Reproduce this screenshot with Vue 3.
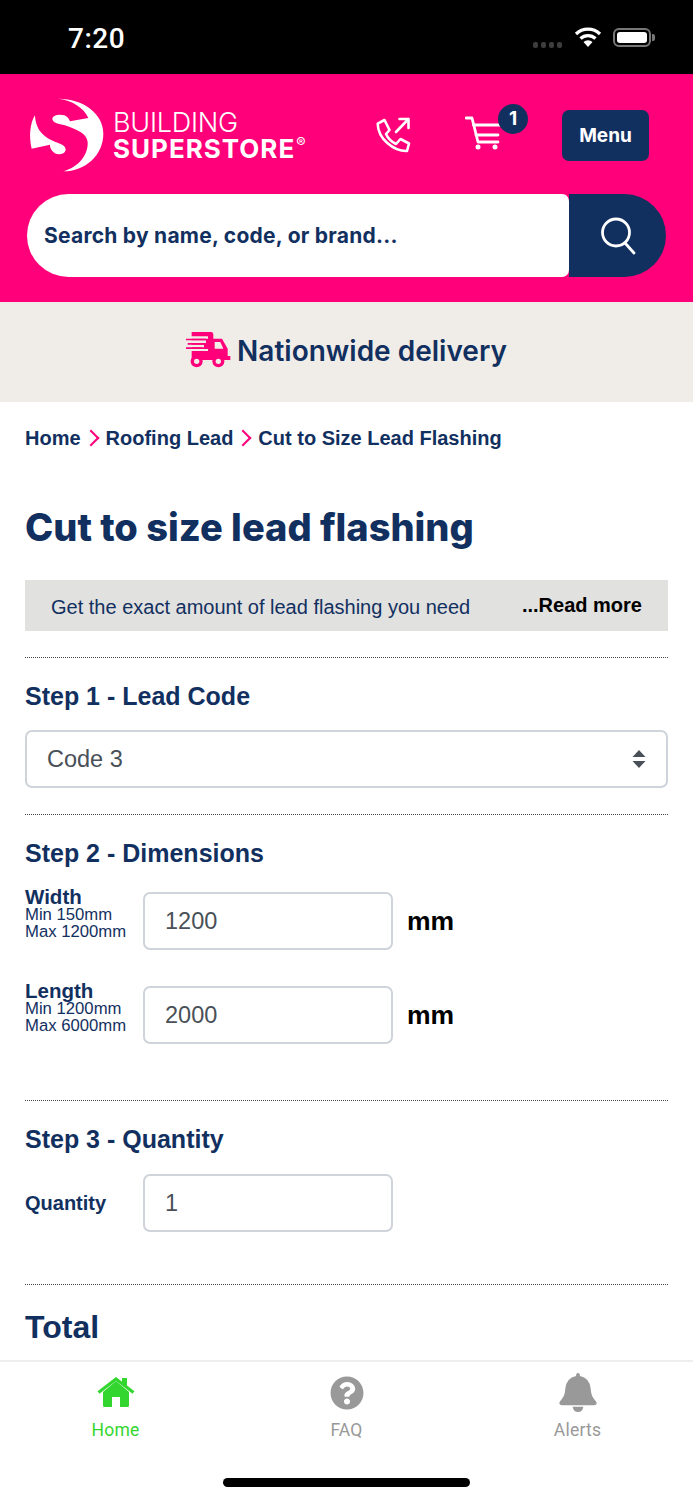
<template>
  <div class="screen">
    <div class="status">
      <span class="time">7:20</span>
      <div class="status-right">
        <div class="dots"><i></i><i></i><i></i><i></i></div>
        <svg class="wifi" width="28" height="22" viewBox="0 0 28 22">
          <path d="M2 8a17 17 0 0 1 24 0" fill="none" stroke="#fff" stroke-width="3.2" />
          <path d="M6.5 12.5a11 11 0 0 1 15 0" fill="none" stroke="#fff" stroke-width="3.2" />
          <path d="M14 21l-4.5-5a6.500 6.500 0 0 1 9 0z" fill="#fff" />
        </svg>
        <div class="battery"><div class="battery-fill"></div></div>
        <div class="battery-cap"></div>
      </div>
    </div>

    <header class="top">
      <div class="top-row">
        <div class="logo">
          <svg class="logo-mark" width="85" height="85" viewBox="0 0 255 255">
            <path fill="#fff" d="M100 20C175 20 235 65 235 125C235 190 180 238 115 238C160 225 190 190 188 150C185 125 160 115 120 100C100 95 82 92 82 80C84 68 105 66 118 70C128 74 133 82 135 88L190 78C178 48 140 24 100 20Z" />
            <path fill="#fff" d="M30 70C14 95 12 135 20 170L75 158C74 172 88 190 108 186C125 182 130 165 105 155C70 143 32 125 30 70Z" />
          </svg>
          <div class="logo-text">
            <span class="logo-building">BUILDING</span>
            <span class="logo-super">SUPERSTORE<sup>®</sup></span>
          </div>
        </div>
        <svg class="phone" width="40" height="40" viewBox="0 0 40 40" fill="none" stroke="#fff" stroke-width="2.6" stroke-linecap="round" stroke-linejoin="round">
          <path d="M2.700 8.700L9.500 5L14.500 15L11 19C13 23.500 17 27 21 29L25.500 24L34 28.500L32 36C19 36.500 3 24 2.700 8.700Z" />
          <path d="M21 17L33.500 4M24.500 4H33.500V13" />
        </svg>
        <div class="cart">
          <svg width="40" height="40" viewBox="0 0 40 40" fill="none" stroke="#fff" stroke-width="2.800" stroke-linecap="round" stroke-linejoin="round">
            <path d="M1 3H7L13 27H33" />
            <path d="M8.500 10H36M11 20H33" />
            <circle cx="13" cy="32" r="2.500" fill="#fff" stroke="none" />
            <circle cx="30" cy="32" r="2.500" fill="#fff" stroke="none" />
          </svg>
          <span class="badge">1</span>
        </div>
        <button class="menu-btn">Menu</button>
      </div>
      <div class="search">
        <div class="search-input">Search by name, code, or brand...</div>
        <div class="search-btn">
          <svg width="38" height="38" viewBox="0 0 38 38" fill="none" stroke="#fff" stroke-width="2.800" stroke-linecap="round">
            <circle cx="16" cy="15.500" r="13.500" />
            <path d="M25 26L34 36" />
          </svg>
        </div>
      </div>
    </header>

    <div class="promo">
      <svg width="46" height="38" viewBox="0 0 138 114">
        <path fill="#ff007a" d="M17 0H75Q82 0 82 8V20H108L125 50V72H133V84H17Z" />
        <path fill="#f0ede8" d="M0 13H66V20H0ZM0 25H60V33H0ZM0 38H54V46H0ZM0 51H66V57H0Z" />
        <path fill="#ff007a" d="M0 20H60V25H0ZM5 33H54V38H5ZM0 46H48V51H0Z" />
        <path fill="#f0ede8" d="M86 30H103L112 50H86Z" />
        <circle cx="32" cy="88" r="18" fill="#ff007a" />
        <circle cx="97" cy="88" r="18" fill="#ff007a" />
        <circle cx="32" cy="88" r="8" fill="#f0ede8" />
        <circle cx="97" cy="88" r="8" fill="#f0ede8" />
      </svg>
      <span>Nationwide delivery</span>
    </div>

    <main class="content">
      <nav class="crumbs">
        <a>Home</a><span class="chev"></span><a>Roofing Lead</a><span class="chev"></span><a>Cut to Size Lead Flashing</a>
      </nav>
      <h1>Cut to size lead flashing</h1>
      <div class="intro">
        <span>Get the exact amount of lead flashing you need</span>
        <b>...Read more</b>
      </div>

      <section class="step">
        <h2>Step 1 - Lead Code</h2>
        <div class="select-wrap">
          <select class="field select">
            <option>Code 3</option>
          </select>
          <svg class="arrows" width="14" height="18" viewBox="0 0 14 18">
            <path fill="#495057" d="M7 0L13.500 7H.5zM7 18L.5 11H13.500z" />
          </svg>
        </div>
      </section>

      <section class="step step-2">
        <h2>Step 2 - Dimensions</h2>
        <div class="dim-list">
          <div v-for="d in dims" :key="d.label" class="dim-row">
            <div class="dim-label">
              <strong>{{ d.label }}</strong>
              <small>{{ d.min }}</small>
              <small>{{ d.max }}</small>
            </div>
            <input class="field short" :value="d.value" />
            <span class="unit">mm</span>
          </div>
        </div>
      </section>

      <section class="step step-3">
        <h2>Step 3 - Quantity</h2>
        <div class="qty-row">
          <label>Quantity</label>
          <input class="field short" value="1" />
        </div>
      </section>

      <section class="step">
        <h2 class="total">Total</h2>
      </section>
    </main>

    <footer class="tabs">
      <div class="tab-row">
        <div class="tab active">
          <svg class="ic-home" width="38" height="30" viewBox="0 0 38 30">
            <path fill="#33d62f" d="M6 15L19 4L32 15V28.500Q32 30 30.500 30H23V20H15V30H7.500Q6 30 6 28.500Z" />
            <path fill="none" stroke="#33d62f" stroke-width="3" d="M1.500 15.500L19 2L36.500 15.500" />
            <path fill="#33d62f" d="M25 1H30V10L25 6Z" />
          </svg>
          <span>Home</span>
        </div>
        <div class="tab">
          <svg width="34" height="34" viewBox="0 0 512 512">
            <path fill="#999" d="M504 256c0 136.997-111.043 248-248 248S8 392.997 8 256C8 119.083 119.043 8 256 8s248 111.083 248 248zM262.655 90c-54.497 0-89.255 22.957-116.549 63.758-3.536 5.286-2.353 12.415 2.715 16.258l34.699 26.31c5.205 3.947 12.621 3.008 16.665-2.122 17.864-22.658 30.113-35.797 57.303-35.797 20.429 0 45.698 13.148 45.698 32.958 0 14.976-12.363 22.667-32.534 33.976C247.128 238.528 216 254.941 216 296v4c0 6.627 5.373 12 12 12h56c6.627 0 12-5.373 12-12v-1.333c0-28.462 83.186-29.647 83.186-106.667 0-58.002-60.165-102-116.531-102zM256 338c-25.365 0-46 20.635-46 46 0 25.364 20.635 46 46 46s46-20.636 46-46c0-25.365-20.635-46-46-46z" />
          </svg>
          <span>FAQ</span>
        </div>
        <div class="tab">
          <svg class="ic-bell" width="38" height="40" viewBox="0 0 38 40">
            <path fill="#999" d="M19 0Q21 0 21 3Q31 5 32 16C32.500 25 36 27 38 30Q38.500 33 35 33H3Q-.5 33 0 30C2 27 5.500 25 6 16Q7 5 17 3Q17 0 19 0Z" />
            <path fill="#999" d="M13.500 34.500H24.500C24 38 22 40 19 40S14 38 13.500 34.500Z" />
          </svg>
          <span>Alerts</span>
        </div>
      </div>
      <div class="home-bar"></div>
    </footer>
  </div>
</template>

<script setup>
const dims = [
  { label: 'Width', min: 'Min 150mm', max: 'Max 1200mm', value: '1200' },
  { label: 'Length', min: 'Min 1200mm', max: 'Max 6000mm', value: '2000' },
]
</script>

<style>
html, body { margin: 0; background: #fff; }
</style>

<style scoped>
.screen {
  width: 693px; height: 1500px; overflow: hidden;
  display: flex; flex-direction: column;
  font-family: "Liberation Sans", Arial, sans-serif;
  background: #fff;
}

.status {
  height: 74px; flex: none; background: #000; color: #fff;
  display: flex; align-items: flex-start; justify-content: space-between;
  padding: 0 38px 0 68px; box-sizing: border-box;
}
.time { font-family: Roboto, sans-serif; font-size: 28px; font-weight: 500; line-height: 77px; letter-spacing: .5px; }
.status-right { display: flex; align-items: center; margin-top: 26px; }
.dots { display: flex; gap: 3px; margin: 16px 12px 0 0; }
.dots i { width: 5px; height: 6px; border-radius: 2px; background: #3d3d3d; }
.wifi { margin-right: 11px; }
.battery { width: 38px; height: 19px; border: 2px solid #777; border-radius: 6px; padding: 2px; box-sizing: border-box; }
.battery-fill { width: 100%; height: 100%; background: #fff; border-radius: 3px; }
.battery-cap { width: 3px; height: 7px; background: #777; border-radius: 0 2px 2px 0; margin-left: 1px; }

.top { height: 228px; flex: none; background: #ff007a; box-sizing: border-box; padding: 18px 27px 0 25px; }
.top-row { display: flex; align-items: center; height: 86px; }
.logo { display: flex; align-items: center; width: 350px; color: #fff; font-family: Inter, sans-serif; }
.logo-mark { flex: none; margin: -2px 3px 0 0; }
.logo-text { display: flex; flex-direction: column; }
.logo-building { font-size: 27px; font-weight: 300; line-height: 27px; letter-spacing: -.25px; }
.logo-super { font-size: 26px; font-weight: 700; line-height: 26px; letter-spacing: 1px; }
.logo-super sup { font-size: 14px; font-weight: 400; letter-spacing: 0; vertical-align: 10px; line-height: 0; margin-left: 1px; }
.phone { flex: none; }
.cart { position: relative; width: 40px; height: 40px; margin-left: 50px; flex: none; }
.badge {
  position: absolute; top: -11px; left: 33px; width: 30px; height: 30px; border-radius: 50%;
  background: #12305f; color: #fff; font: 700 19px/30px Inter, sans-serif; text-align: center;
}
.menu-btn {
  margin: 0 17px 0 auto; width: 87px; height: 51px; border: 0; border-radius: 7px;
  background: #12305f; color: #fff; font: 700 19px Inter, sans-serif; padding: 0;
}

.search { display: flex; height: 83px; margin: 16px 0 0 2px; }
.search-input {
  flex: 1; background: #fff; border-radius: 42px 7px 7px 42px;
  display: flex; align-items: center; padding-left: 17px;
  font: 700 21px Inter, sans-serif; letter-spacing: .25px; color: #12305f;
}
.search-btn {
  width: 97px; flex: none; background: #12305f; border-radius: 0 42px 42px 0;
  display: flex; align-items: center; justify-content: center; padding-left: 2px; box-sizing: border-box;
}

.promo {
  height: 100px; flex: none; background: #f0ede8; padding-bottom: 3px; box-sizing: border-box;
  display: flex; align-items: center; justify-content: center; gap: 5px;
  font: 600 28px Inter, sans-serif; color: #12305f;
}

.content { flex: 1; min-height: 0; overflow: hidden; padding: 0 25px; color: #12305f; }
.crumbs { display: flex; align-items: center; font-size: 20px; font-weight: 700; height: 24px; margin-top: 24px; }
.chev {
  width: 10px; height: 10px; border: solid #ff007a; border-width: 2.500px 2.500px 0 0;
  transform: rotate(45deg); margin: 0 9px 0 4px;
}
h1 { font: 800 38px/44px Inter, sans-serif; margin: 55px 0 31px; }
.intro {
  height: 51px; background: #e1e1df; box-sizing: border-box; padding: 0 26px;
  display: flex; align-items: center; justify-content: space-between; font-size: 20px;
}
.intro span { padding-top: 4px; }
.intro b { color: #000; }

.step { border-top: 1px dotted #444; margin-top: 26px; }
h2 { font-size: 25px; line-height: 30px; font-weight: 700; margin: 23px 0 19px; }
.field {
  display: block; box-sizing: border-box; height: 58px; background: #fff; color: #495057;
  border: 2px solid #ced4da; border-radius: 7px; font: 400 23.5px "Liberation Sans", Arial, sans-serif;
  padding: 0 20px; outline: none;
}
.select-wrap { position: relative; }
.select { width: 100%; appearance: none; }
.arrows { position: absolute; right: 22px; top: 20px; pointer-events: none; }
.short { width: 250px; }

.step-2 h2 { margin-bottom: 24px; }
.dim-list { display: flex; flex-direction: column; gap: 36px; padding-bottom: 30px; }
.dim-row { display: flex; align-items: center; height: 58px; }
.dim-label { width: 118px; flex: none; display: flex; flex-direction: column; align-self: flex-start; margin-top: -4px; }
.dim-label strong { font-size: 20.5px; line-height: 18px; }
.dim-label small { font-size: 16.7px; line-height: 17px; }
.unit { font-size: 26.5px; font-weight: 700; color: #000; margin-left: 14px; }

.step-3 h2 { margin-bottom: 20px; }
.qty-row { display: flex; align-items: center; padding-bottom: 26px; }
.qty-row label { width: 118px; flex: none; font-size: 20px; font-weight: 700; }
.total { font-size: 32px; line-height: 40px; margin-top: 22px; }

.tabs { height: 140px; flex: none; border-top: 2px solid #eee; box-sizing: border-box; background: #fff; position: relative; }
.tab-row { display: grid; grid-template-columns: repeat(3, 1fr); padding-top: 11px; }
.tab { display: flex; flex-direction: column; align-items: center; height: 67px; justify-content: flex-end; font: 400 17.5px/20px Roboto, sans-serif; letter-spacing: .2px; color: #999; gap: 10px; }
.ic-home { margin-bottom: 3px; }
.ic-bell { margin-bottom: -2px; }
.active { color: #33d62f; }
.home-bar { position: absolute; left: 223px; top: 116px; width: 247px; height: 9px; background: #000; border-radius: 5px; }
</style>
